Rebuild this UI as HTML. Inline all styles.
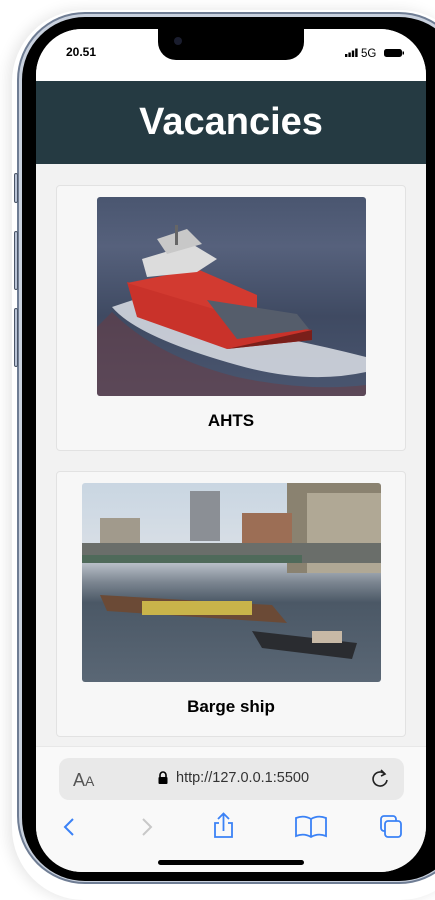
<!DOCTYPE html>
<html><head><meta charset="utf-8"><style>
*{margin:0;padding:0;box-sizing:border-box}
body{width:435px;height:883px;background:#fff;overflow:hidden;position:relative;font-family:"Liberation Sans",sans-serif}
.shadow{position:absolute;left:12px;top:10px;width:460px;height:890px;border-radius:72px;box-shadow:-4px 0 14px rgba(0,0,0,.10)}
.frame{position:absolute;left:17px;top:12px;width:450px;height:872px;border-radius:68px;background:#6f7d94;}
.frame2{position:absolute;left:19px;top:14px;width:446px;height:868px;border-radius:66px;background:#c9d1de}
.bezel{position:absolute;left:22px;top:17px;width:440px;height:864px;border-radius:63px;background:#000}
.btn{position:absolute;left:14px;width:4px;background:#b9c3d6;border:1px solid #4a5568;border-radius:2px}
.screen{position:absolute;left:36px;top:29px;width:390px;height:843px;border-radius:46px;overflow:hidden;background:#f2f2f2}
.status{position:absolute;left:0;top:0;width:390px;height:52px;background:#fff}
.notch{position:absolute;left:122px;top:0;width:146px;height:31px;background:#000;border-radius:0 0 18px 18px}
.time{position:absolute;left:30px;top:16px;font-size:12px;font-weight:bold}
.header{position:absolute;top:52px;left:0;width:390px;height:83px;background:#253a42;color:#fff;text-align:center;font-weight:bold;font-size:38px;line-height:83px}
.card{position:absolute;left:20px;width:350px;background:#f7f7f7;border:1px solid #e2e2e2;border-radius:4px}
.card .t{position:absolute;width:100%;text-align:center;font-weight:bold;font-size:17px}
.img{position:absolute;border-radius:3px;overflow:hidden}
.bottom{position:absolute;left:0;top:717px;width:390px;height:127px;background:#f9f9f9;border-top:1px solid #e8e8e8}
.url{position:absolute;left:23px;top:11px;width:345px;height:42px;background:#e9e9e9;border-radius:10px}
.home{position:absolute;left:122px;top:113px;width:146px;height:5px;border-radius:3px;background:#000}
</style></head><body>
<div class="shadow"></div>
<div class="frame"></div><div class="frame2"></div><div class="bezel"></div>
<div class="btn" style="top:173px;height:30px"></div>
<div class="btn" style="top:231px;height:59px"></div>
<div class="btn" style="top:308px;height:59px"></div>
<div class="screen">
 <div class="status">
  <div class="time">20.51</div>
  <div class="notch"><div style="position:absolute;left:16px;top:8px;width:8px;height:8px;border-radius:50%;background:#1a1d2e"></div></div>
  <svg style="position:absolute;left:309px;top:19px" width="60" height="10" viewBox="0 0 60 10">
   <rect x="0" y="6" width="2.4" height="3" fill="#000"/><rect x="3.4" y="4.5" width="2.4" height="4.5"/><rect x="6.8" y="2.5" width="2.4" height="6.5"/><rect x="10.2" y="0.5" width="2.4" height="8.5"/>
   <text x="16" y="9" font-size="11.5" font-family="Liberation Sans" fill="#000">5G</text>
   <rect x="39" y="1" width="18" height="8" rx="2.5" fill="#000"/><rect x="57.5" y="3.5" width="1.5" height="3" fill="#000"/>
  </svg>
 </div>
 <div class="header">Vacancies</div>
 <div class="card" style="top:156px;height:266px">
  <div class="img" style="left:40px;top:11px;width:269px;height:199px;background:linear-gradient(180deg,#4a5670 0%,#56617c 25%,#3f4a62 60%,#4a5670 100%)">
   <svg width="269" height="199" viewBox="0 0 269 199">
    <path d="M15 115 Q60 160 140 180 Q210 195 269 188 L269 199 L0 199 L0 130 Z" fill="#6d3a40" opacity=".5"/>
    <path d="M15 110 Q40 140 140 168 Q210 188 269 175 L269 160 Q230 150 190 142 Q120 125 60 95 Z" fill="#dcdfe6" opacity=".85"/>
    <path d="M30 85 L160 125 L215 133 L215 143 L130 152 L40 120 Z" fill="#c9322a"/>
    <path d="M30 86 L100 72 L160 98 L160 125 Z" fill="#d23a30"/>
    <path d="M45 62 L95 47 L120 62 L100 75 L50 80 Z" fill="#dcdcdc"/>
    <path d="M60 42 L90 32 L105 47 L70 57 Z" fill="#c8c8c8"/>
    <rect x="78" y="28" width="3" height="20" fill="#666"/>
    <path d="M110 103 L200 117 L212 132 L140 142 Z" fill="#555d6b"/>
    <path d="M130 152 L215 143 L215 133 Z" fill="#7a1f1a"/>
   </svg>
  </div>
  <div class="t" style="top:225px">AHTS</div>
 </div>
 <div class="card" style="top:442px;height:266px">
  <div class="img" style="left:25px;top:11px;width:299px;height:199px;background:linear-gradient(180deg,#c9d6e2 0%,#d9dfe6 35%,#7b8590 50%,#4b5866 60%,#5a6775 100%)">
   <svg width="299" height="199" viewBox="0 0 299 199">
    <rect x="108" y="8" width="30" height="50" fill="#8b8f95"/>
    <rect x="205" y="0" width="94" height="90" fill="#8a8270"/>
    <rect x="225" y="10" width="74" height="80" fill="#b0a895"/>
    <rect x="160" y="30" width="50" height="45" fill="#9c6e55"/>
    <rect x="18" y="35" width="40" height="30" fill="#a19a8c"/>
    <rect x="0" y="60" width="299" height="20" fill="#6a6e6a"/>
    <rect x="0" y="72" width="220" height="8" fill="#4f6a5a"/>
    <path d="M18 112 L190 122 L205 140 L25 128 Z" fill="#6b4a36"/>
    <rect x="60" y="118" width="110" height="14" fill="#c9b44a"/>
    <path d="M170 148 L275 160 L270 176 L180 165 Z" fill="#2a2c30"/>
    <rect x="230" y="148" width="30" height="12" fill="#c7b9a6"/>
   </svg>
  </div>
  <div class="t" style="top:225px">Barge ship</div>
 </div>
 <div class="bottom">
  <div class="url">
   <span style="position:absolute;left:14px;top:12px;font-size:18px;color:#555">A<span style="font-size:14px">A</span></span>
   <svg style="position:absolute;left:98px;top:13px" width="12" height="14" viewBox="0 0 12 14"><path d="M3 6V4a3 3 0 0 1 6 0v2" stroke="#000" stroke-width="1.6" fill="none"/><rect x="1.5" y="6" width="9" height="7" rx="1" fill="#000"/></svg>
   <span style="position:absolute;left:117px;top:12px;font-size:14.5px;color:#333">http://127.0.0.1:5500</span>
   <svg style="position:absolute;left:311px;top:11px" width="20" height="20" viewBox="0 0 20 20"><path d="M15 5A7 7 0 1 0 17 11" stroke="#222" stroke-width="1.6" fill="none"/><path d="M11 1l4 4-4 2" stroke="#222" stroke-width="1.6" fill="none"/></svg>
  </div>
  <svg style="position:absolute;left:0;top:65px" width="390" height="30" viewBox="0 0 390 30">
   <path d="M37 7l-8 8 8 8" stroke="#3b82f6" stroke-width="2" fill="none"/>
   <path d="M107 7l8 8-8 8" stroke="#c8c8c8" stroke-width="2" fill="none"/>
   <path d="M183 11h-4v14h17v-14h-4M187.5 19V2M182 7l5.5-5.5L193 7" stroke="#3b82f6" stroke-width="1.8" fill="none"/>
   <path d="M260 6v18c5-2 10-2 15 1c5-3 10-3 15-1V6c-5-2-10-2-15 1c-5-3-10-3-15-1zM275 7v18" stroke="#3b82f6" stroke-width="1.8" fill="none"/>
   <rect x="345" y="4" width="15" height="15" rx="3" stroke="#3b82f6" stroke-width="1.8" fill="none"/>
   <rect x="349" y="9" width="16" height="16" rx="3" stroke="#3b82f6" stroke-width="1.8" fill="#f9f9f9"/>
  </svg>
  <div class="home"></div>
 </div>
</div>
</body></html>
